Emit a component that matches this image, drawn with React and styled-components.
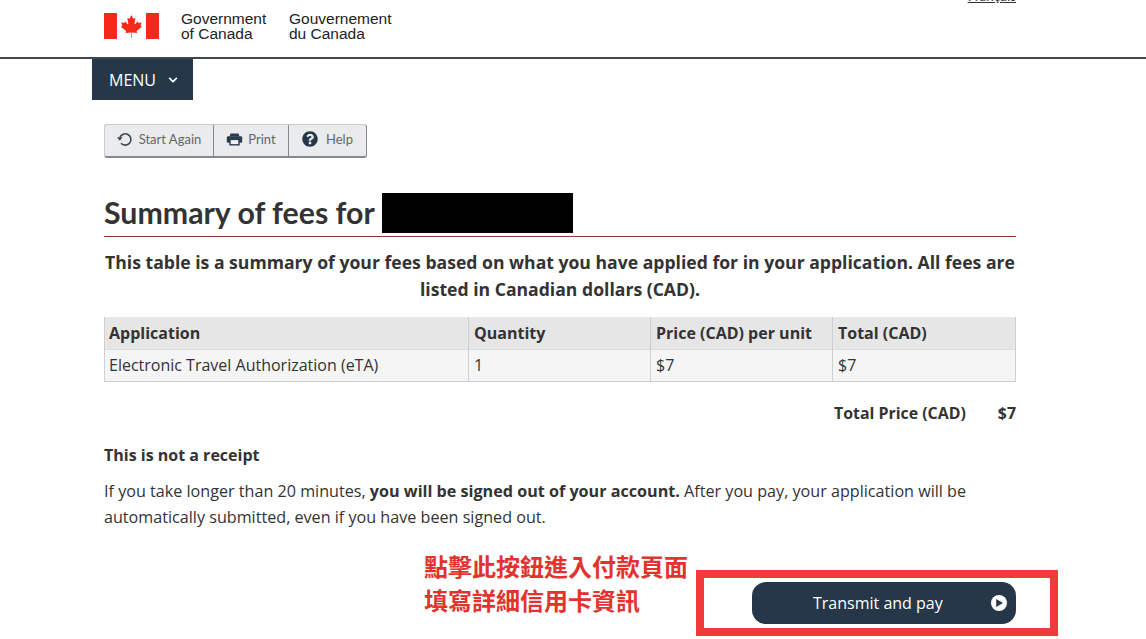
import React from 'react';
import styled, { createGlobalStyle } from 'styled-components';
import { FaQuestionCircle, FaChevronDown } from 'react-icons/fa';

const GlobalStyle = createGlobalStyle`
  html, body {
    margin: 0;
    padding: 0;
    background: #fff;
    overflow: hidden;
  }
  body {
    font-family: 'Open Sans', 'Noto Sans', sans-serif;
    color: #333;
  }
`;

const Page = styled.div`
  width: 1146px;
  height: 639px;
  overflow: hidden;
`;

const Header = styled.header`
  height: 57px;
  border-bottom: 2px solid #41474b;
  display: flex;
  justify-content: space-between;
  padding: 0 130px 0 104px;
`;

const Brand = styled.div`
  display: flex;
  align-items: flex-start;
  padding-top: 11px;
`;

const Flag = styled.svg`
  width: 55px;
  height: 27px;
  margin: 2px 22px 0 0;
`;

const BrandName = styled.div`
  font-family: 'Liberation Sans', Arial, sans-serif;
  font-size: 15.5px;
  line-height: 15px;
  color: #222;
  width: 108px;
`;

const LangLink = styled.a`
  font-family: 'Lato', sans-serif;
  font-size: 13.5px;
  line-height: 16px;
  margin-top: -12px;
  height: 16px;
  color: #333;
  text-decoration: underline;
`;

const MenuBar = styled.div`
  margin-left: 92px;
  width: 101px;
  height: 41px;
  background: #26374a;
  color: #fff;
  font-size: 16px;
  display: flex;
  align-items: center;
  padding-left: 17px;
  gap: 12px;
  box-sizing: border-box;
`;

const Content = styled.main`
  margin: 0 130px 0 104px;
  width: 912px;
`;

const ButtonGroup = styled.div`
  display: inline-flex;
  margin-top: 24px;
  height: 34px;
  border-radius: 3px;
  border: 1px solid #c8cbcd;
  border-right: 1px solid #85898c;
  border-bottom: 2px solid #85898c;
  box-sizing: border-box;
  background: #e9ebec;
`;

const GroupButton = styled.div`
  width: ${(p) => p.$width}px;
  display: flex;
  align-items: center;
  justify-content: center;
  gap: ${(p) => p.$gap}px;
  box-sizing: border-box;
  font-family: 'Lato', sans-serif;
  font-size: 13px;
  color: #666;
  padding-bottom: 3px;
  & + & {
    border-left: 1px solid #85898c;
  }
  svg {
    flex: none;
  }
`;

const Title = styled.h1`
  margin: 35px 0 0;
  height: 43px;
  border-bottom: 1px solid #8e3f30;
  display: flex;
  align-items: flex-start;
  gap: 7px;
  font-family: 'Lato', sans-serif;
  font-weight: 700;
  font-size: 30.3px;
  line-height: 38px;
  color: #333;
`;

const Redaction = styled.span`
  display: block;
  width: 191px;
  height: 40px;
  background: #000;
`;

const Lead = styled.p`
  margin: 12px 0 0;
  font-size: 17.6px;
  line-height: 27px;
  font-weight: 700;
  text-align: center;
  color: #333;
  white-space: nowrap;
`;

const FeeTable = styled.table`
  margin-top: 14px;
  width: 911px;
  table-layout: fixed;
  border-collapse: collapse;
  font-size: 16px;
  border-bottom: 1px solid #cfcfcf;
  th, td {
    height: 32px;
    padding: 0 5px;
    text-align: left;
    box-sizing: border-box;
    border-left: 1px solid #cfcfcf;
    border-right: 1px solid #cfcfcf;
  }
  th:first-child, td:first-child {
    padding-left: 4px;
  }
  th {
    background: #e6e6e6;
    font-weight: 700;
  }
  td {
    background: #f5f5f5;
    border-top: 1px solid #dcdcdc;
  }
`;

const TotalRow = styled.div`
  margin-top: 20px;
  display: flex;
  justify-content: flex-end;
  gap: 32px;
  font-size: 15.9px;
  line-height: 22px;
  font-weight: 700;
`;

const Subhead = styled.h2`
  margin: 19px 0 0;
  font-size: 16px;
  line-height: 24px;
  font-weight: 700;
`;

const Body = styled.p`
  margin: 11px 0 0;
  font-size: 16.15px;
  line-height: 26px;
  strong {
    font-weight: 700;
  }
`;

const Action = styled.div`
  margin: 40px -42px 0 0;
  display: flex;
  justify-content: flex-end;
  gap: 8px;
`;

const Note = styled.div`
  font-family: 'Noto Sans CJK TC', 'Noto Sans', sans-serif;
  font-size: 24px;
  line-height: 34px;
  font-weight: 700;
  color: #e2332f;
  margin-top: -21px;
`;

const Highlight = styled.div`
  width: 362px;
  height: 66px;
  box-sizing: border-box;
  border: 8px solid #f13a3a;
  display: flex;
  justify-content: flex-end;
  align-items: center;
  padding-right: 34px;
`;

const PayButton = styled.div`
  width: 264px;
  height: 42px;
  border-radius: 14px;
  background: #26374a;
  color: #fff;
  font-size: 16px;
  display: flex;
  align-items: center;
  justify-content: space-between;
  box-sizing: border-box;
  padding: 0 8px 0 61px;
`;

const MapleFlag = () => (
  <Flag viewBox="0 0 55 27">
    <rect width="13" height="26" fill="#f5291a" />
    <rect x="42" width="13" height="26" fill="#f5291a" />
    <path
      fill="#f5291a"
      d="M27.5 2l-1.9 3.4c-.2.4-.6.3-.9.2l-1.4-.7 1 5.4c.2 1-.5 1-.9.6l-2.3-2.6-.4 1.3c0 .2-.3.3-.5.3l-3-.6.8 2.8c.2.6.3.9-.2 1.1l-1 .5 5.1 4.1c.2.2.3.5.2.8l-.5 1.5 5.2-.6c.2 0 .4.1.4.3l-.2 4.6h.8l-.2-4.6c0-.2.2-.3.4-.3l5.2.6-.5-1.5c-.1-.3 0-.6.2-.8l5.1-4.1-1-.5c-.5-.2-.4-.5-.2-1.1l.8-2.8-3 .6c-.2 0-.5-.1-.5-.3l-.4-1.3-2.3 2.6c-.4.4-1.1.4-.9-.6l1-5.4-1.4.7c-.3.1-.7.2-.9-.2z"
    />
  </Flag>
);

const RestartIcon = () => (
  <svg width="16" height="16" viewBox="0 0 16 16" fill="none" stroke="#3d4650" strokeWidth="1.6">
    <path d="M2.8 6.6A5.7 5.7 0 1 1 4 12.3" />
    <path d="M0 6.2h5.6L2.8 9.8z" fill="#3d4650" stroke="none" />
  </svg>
);

const PrintIcon = () => (
  <svg width="17" height="16" viewBox="0 0 17 16">
    <path d="M4.5 2.5h8l1 3h-10z" fill="#2c3d50" />
    <rect x="0.8" y="5.2" width="15.4" height="6.6" rx="1.4" fill="#2c3d50" />
    <rect x="4" y="8.4" width="9" height="5.4" fill="#f1f2f3" stroke="#2c3d50" strokeWidth="1.4" />
  </svg>
);

const PlayIcon = () => (
  <svg width="18" height="18" viewBox="0 0 18 18">
    <circle cx="9" cy="9" r="8" fill="#fff" />
    <path d="M6.2 5l6.8 4-6.8 4z" fill="#26374a" />
  </svg>
);

const App = () => {
  return (
    <Page>
      <GlobalStyle />
      <Header>
        <Brand>
          <MapleFlag />
          <BrandName>
            Government
            <br />
            of Canada
          </BrandName>
          <BrandName>
            Gouvernement
            <br />
            du Canada
          </BrandName>
        </Brand>
        <LangLink>Français</LangLink>
      </Header>
      <MenuBar>
        MENU
        <FaChevronDown size={10} />
      </MenuBar>
      <Content>
        <ButtonGroup>
          <GroupButton $width={108} $gap={6}>
            <RestartIcon />
            Start Again
          </GroupButton>
          <GroupButton $width={75} $gap={5}>
            <PrintIcon />
            Print
          </GroupButton>
          <GroupButton $width={78} $gap={8}>
            <FaQuestionCircle size={16} color="#26374a" />
            Help
          </GroupButton>
        </ButtonGroup>
        <Title>
          Summary of fees for
          <Redaction />
        </Title>
        <Lead>
          This table is a summary of your fees based on what you have applied for in your application. All fees are
          <br />
          listed in Canadian dollars (CAD).
        </Lead>
        <FeeTable>
          <colgroup>
            <col style={{ width: 364 }} />
            <col style={{ width: 182 }} />
            <col style={{ width: 182 }} />
            <col style={{ width: 183 }} />
          </colgroup>
          <thead>
            <tr>
              <th>Application</th>
              <th>Quantity</th>
              <th>Price (CAD) per unit</th>
              <th>Total (CAD)</th>
            </tr>
          </thead>
          <tbody>
            <tr>
              <td>Electronic Travel Authorization (eTA)</td>
              <td>1</td>
              <td>$7</td>
              <td>$7</td>
            </tr>
          </tbody>
        </FeeTable>
        <TotalRow>
          <span>Total Price (CAD)</span>
          <span>$7</span>
        </TotalRow>
        <Subhead>This is not a receipt</Subhead>
        <Body>
          If you take longer than 20 minutes, <strong>you will be signed out of your account.</strong> After you pay,
          your application will be automatically submitted, even if you have been signed out.
        </Body>
        <Action>
          <Note>
            點擊此按鈕進入付款頁面
            <br />
            填寫詳細信用卡資訊
          </Note>
          <Highlight>
            <PayButton>
              Transmit and pay
              <PlayIcon />
            </PayButton>
          </Highlight>
        </Action>
      </Content>
    </Page>
  );
};

export default App;
